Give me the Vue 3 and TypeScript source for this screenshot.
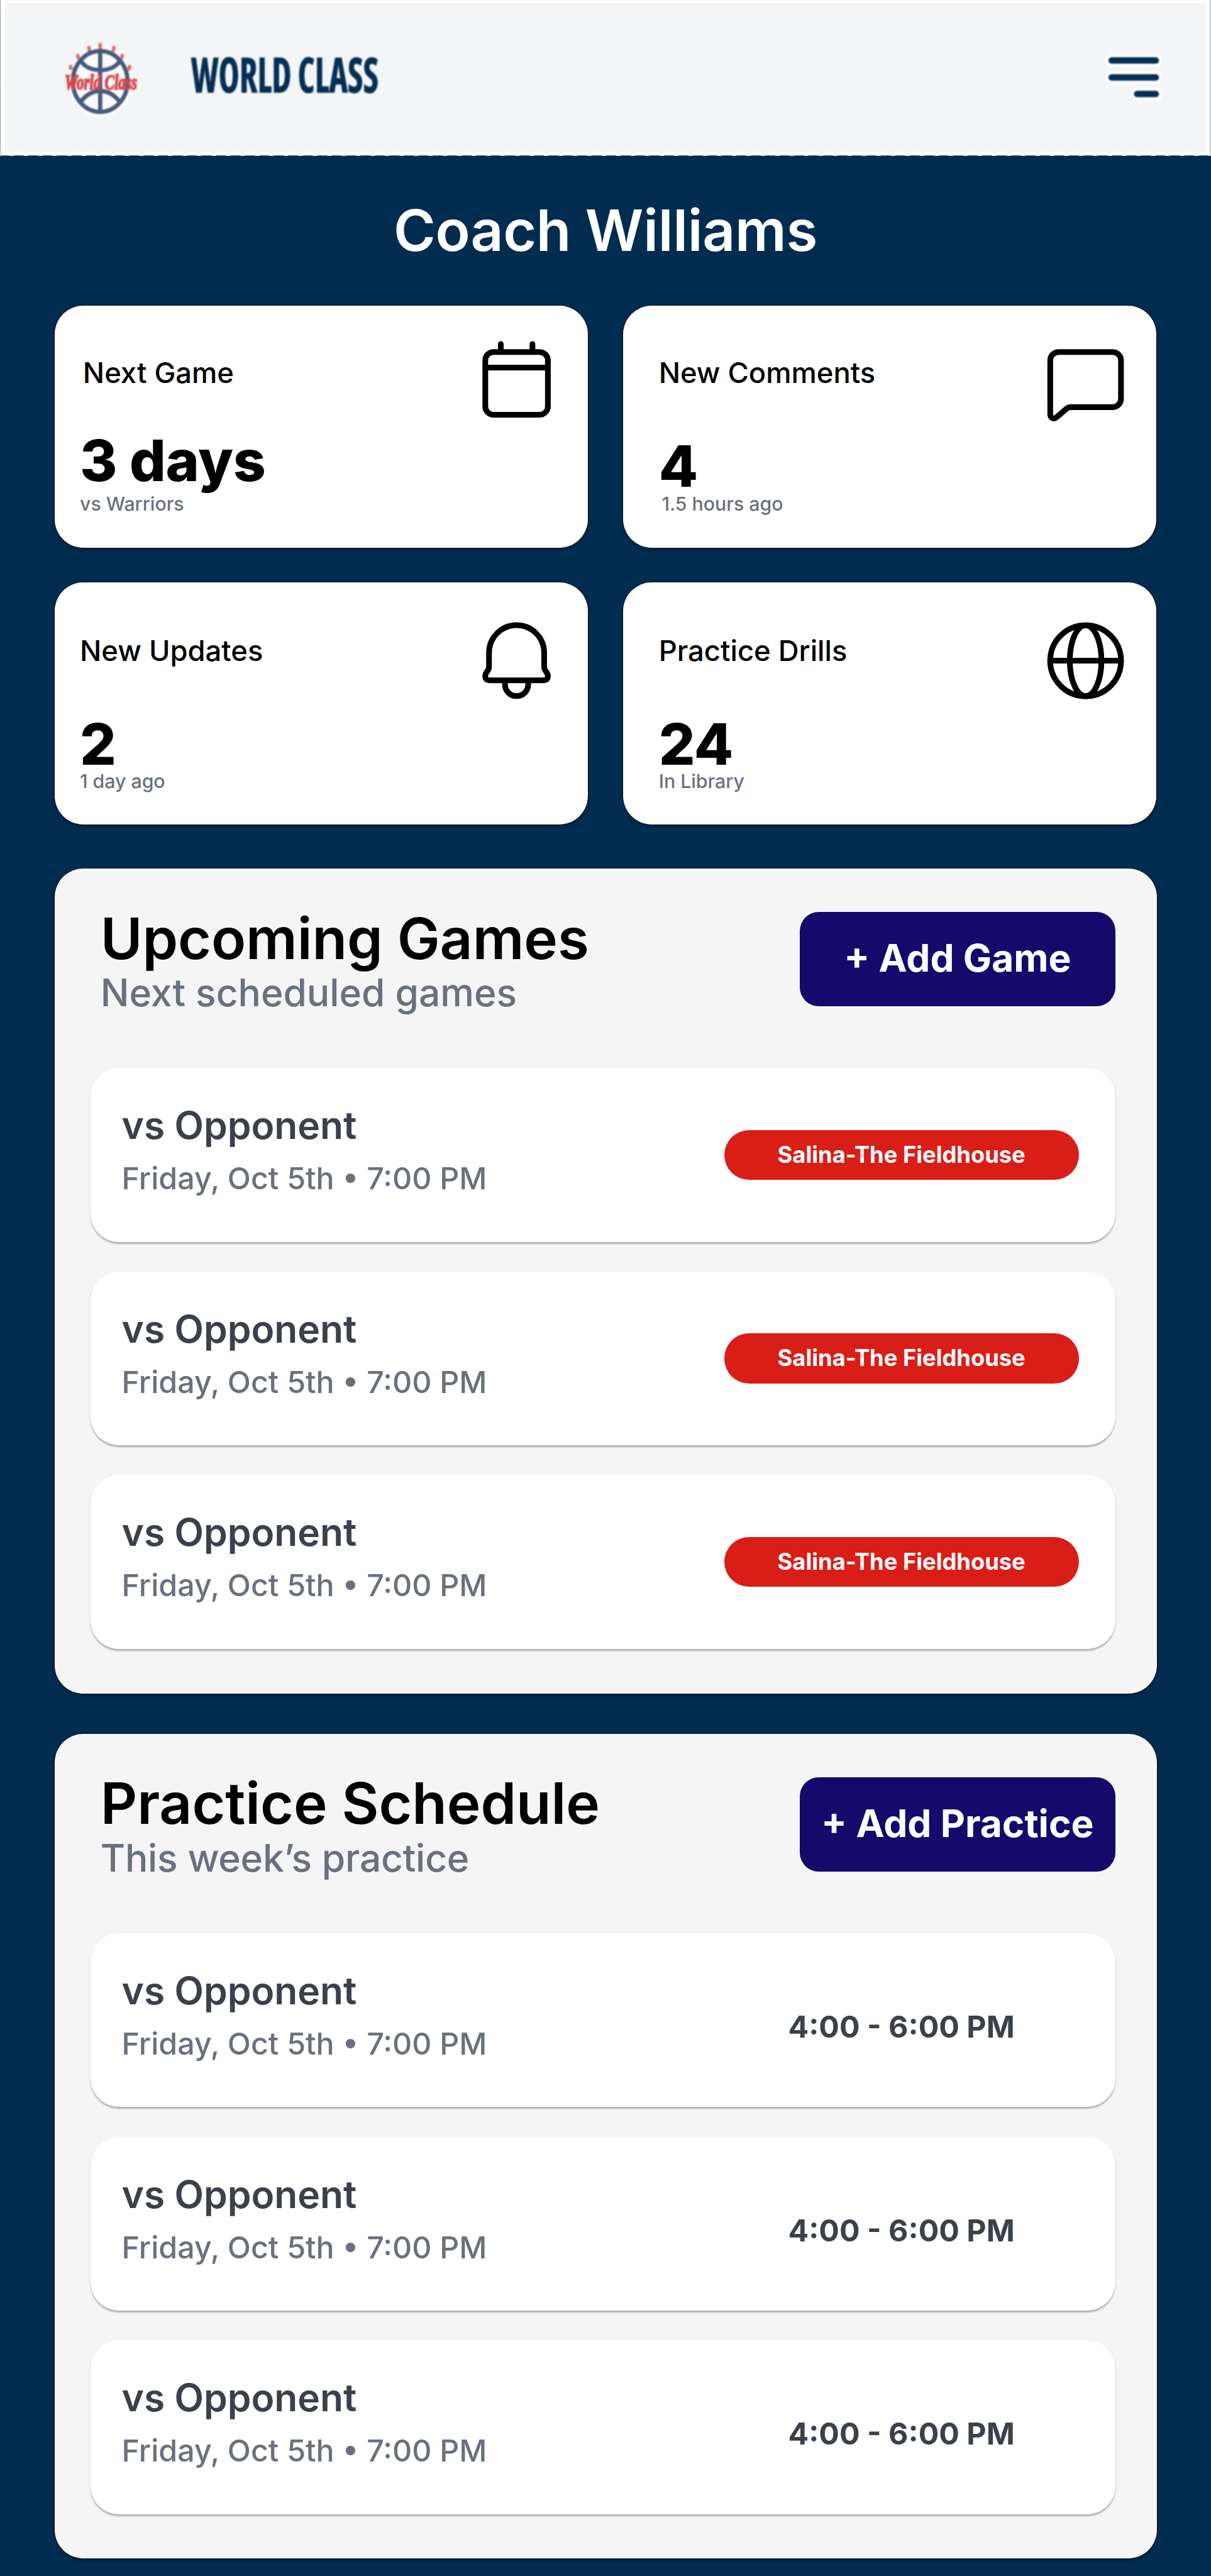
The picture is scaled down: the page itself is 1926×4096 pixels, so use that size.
<script setup lang="ts">
type IconName = 'calendar' | 'comment' | 'bell' | 'globe'

interface Stat {
  label: string
  value: string
  note: string
  icon: IconName
  variant: string
}

interface Entry {
  title: string
  when: string
  detail: string
}

interface Panel {
  title: string
  subtitle: string
  action: string
  kind: 'pill' | 'time'
  entries: Entry[]
}

const stats: Stat[] = [
  { label: 'Next Game', value: '3 days', note: 'vs Warriors', icon: 'calendar', variant: 'raised' },
  { label: 'New Comments', value: '4', note: '1.5 hours ago', icon: 'comment', variant: 'wide note-in' },
  { label: 'New Updates', value: '2', note: '1 day ago', icon: 'bell', variant: 'low' },
  { label: 'Practice Drills', value: '24', note: 'In Library', icon: 'globe', variant: 'wide low' },
]

const repeat = (detail: string): Entry[] =>
  Array.from({ length: 3 }, () => ({ title: 'vs Opponent', when: 'Friday, Oct 5th • 7:00 PM', detail }))

const panels: Panel[] = [
  {
    title: 'Upcoming Games',
    subtitle: 'Next scheduled games',
    action: '+ Add Game',
    kind: 'pill',
    entries: repeat('Salina-The Fieldhouse'),
  },
  {
    title: 'Practice Schedule',
    subtitle: 'This week’s practice',
    action: '+ Add Practice',
    kind: 'time',
    entries: repeat('4:00 - 6:00 PM'),
  },
]
</script>

<template>
  <div class="page">
    <header class="topbar">
      <svg class="brand" viewBox="0 0 1400 300" role="img" aria-label="World Class">
        <ellipse class="halo" cx="113" cy="157" rx="84" ry="96" />
        <g class="rays">
          <path d="M113 57v16M83 65l2 15M150 65l-3 15M53 86l3 13M172 86l-3 13M34 115l3 12M191 115l-3 14" />
        </g>
        <g class="ball">
          <ellipse cx="113" cy="158" rx="72" ry="80" />
          <path d="M113 78V238M61 102Q76 128 113 128Q150 128 166 102M62 211Q84 183 113 183Q142 183 164 211" />
        </g>
        <text class="script" x="20" y="178" textLength="190" lengthAdjust="spacingAndGlyphs">World Class</text>
        <text class="wordmark" x="352" y="187" textLength="493" lengthAdjust="spacingAndGlyphs">WORLD CLASS</text>
      </svg>
      <svg class="menu" viewBox="0 0 160 130" aria-label="Menu">
        <path class="menu-halo" d="M21.500 23.500H137.500M21.500 68H137.500M88.500 111.500H137.500" />
        <path class="menu-bars" d="M21.500 23.500H137.500M21.500 68H137.500M88.500 111.500H137.500" />
      </svg>
    </header>

    <h1 class="coach">Coach Williams</h1>

    <section class="stats">
      <article v-for="s in stats" :key="s.label" class="card" :class="s.variant">
        <div class="card-text">
          <span class="label">{{ s.label }}</span>
          <strong class="value">{{ s.value }}</strong>
          <span class="note">{{ s.note }}</span>
        </div>
        <svg class="icon" viewBox="0 0 240 240">
          <template v-if="s.icon === 'calendar'">
            <rect x="37.700" y="37.500" width="164.600" height="165" rx="22" />
            <path d="M37.700 78.400H202.300M78.500 16.500V37M161.700 16.500V37" />
          </template>
          <path
            v-else-if="s.icon === 'comment'"
            d="M27 59.500V201C27 211 36 215 43 209.500L70 186.500Q75 182.500 82 182.500H191A22 22 0 0 0 213 160.500V59.500A22 22 0 0 0 191 37.500H49A22 22 0 0 0 27 59.500Z"
          />
          <template v-else-if="s.icon === 'bell'">
            <path
              d="M47.500 99A72.500 72.500 0 0 1 192.500 99V137C192.500 147 202.300 150 202.300 160V162A9.400 9.400 0 0 1 192.900 171.400H47.100A9.400 9.400 0 0 1 37.700 162V160C37.700 150 47.500 147 47.500 137Z"
            />
            <path d="M89.500 173V182.500A30.500 30.500 0 0 0 150.500 182.500V173" />
          </template>
          <template v-else>
            <circle cx="120" cy="120" r="93.200" />
            <ellipse cx="120" cy="120" rx="41.600" ry="93.200" />
            <path d="M27 120H213" />
          </template>
        </svg>
      </article>
    </section>

    <section v-for="p in panels" :key="p.title" class="panel">
      <div class="panel-head">
        <div class="panel-titles">
          <h2>{{ p.title }}</h2>
          <p>{{ p.subtitle }}</p>
        </div>
        <button type="button" class="action">{{ p.action }}</button>
      </div>
      <ul class="list">
        <li v-for="(e, i) in p.entries" :key="i" class="item">
          <div class="item-text">
            <h3>{{ e.title }}</h3>
            <p>{{ e.when }}</p>
          </div>
          <span :class="p.kind">{{ e.detail }}</span>
        </li>
      </ul>
    </section>
  </div>
</template>

<style>
html {
  font-size: calc(100vw / 31.84);
}
body {
  margin: 0;
  background: #002c50;
}
</style>

<style scoped>
.page {
  box-sizing: border-box;
  width: 100%;
  height: 67.72rem;
  overflow: hidden;
  background: #002c50;
  font-family: Inter, 'Liberation Sans', sans-serif;
}
h1, h2, h3, p, ul {
  margin: 0;
  padding: 0;
}

.topbar {
  box-sizing: border-box;
  height: 4.1rem;
  display: flex;
  justify-content: space-between;
  align-items: flex-start;
  padding: 0.56rem 1.22rem 0 1.51rem;
  background:
    linear-gradient(90deg, #8a8d92, #fff) left / 0.03rem 100% no-repeat,
    linear-gradient(270deg, #9fbcd6, #fff) right / 0.05rem 100% no-repeat,
    repeating-linear-gradient(90deg, #44566f 0 0.22rem, #dfe6ee 0.26rem 0.34rem, #44566f 0.38rem) bottom / 100% 0.025rem no-repeat,
    linear-gradient(#fff, #fff) top / 100% 0.09rem no-repeat,
    repeating-linear-gradient(90deg, #fff 0 0.24rem, #f4f5f7 0.28rem 0.34rem, #fff 0.38rem) bottom / 100% 0.12rem no-repeat,
    linear-gradient(#fff, #fff) left / 0.13rem 100% no-repeat,
    linear-gradient(#fff, #fff) right / 0.14rem 100% no-repeat,
    #f4f5f7;
}
.brand {
  flex: none;
  width: 14rem;
  height: 3rem;
  filter: blur(1px);
}
.halo { fill: #fafcfd; }
.rays path {
  fill: none;
  stroke: #dd6a6d;
  stroke-width: 9;
}
.ball ellipse, .ball path {
  fill: none;
  stroke: #475a7d;
  stroke-width: 11;
}
.script {
  font: italic 700 54px 'Liberation Serif', serif;
  fill: #d8484c;
  stroke: #d8484c;
  stroke-width: 3;
}
.wordmark {
  font: 700 127px 'Open Sans', sans-serif;
  font-stretch: 75%;
  fill: #042f54;
  stroke: #042f54;
  stroke-width: 1.5;
}
.menu {
  width: 1.6rem;
  height: 1.3rem;
  margin-top: 0.79rem;
  filter: blur(1px);
}
.menu path {
  fill: none;
  stroke-linecap: round;
}
.menu-halo {
  stroke: #fff;
  stroke-width: 34;
}
.menu-bars {
  stroke: #042f54;
  stroke-width: 17;
}

.coach {
  padding: 1.205rem 0 1.225rem;
  text-align: center;
  font-size: 1.5rem;
  line-height: 1.5rem;
  font-weight: 600;
  letter-spacing: -0.0025em;
  color: #fff;
}

.stats {
  display: grid;
  grid-template-columns: repeat(2, 14.03rem);
  gap: 0.905rem 0.92rem;
  margin-left: 1.43rem;
}
.card {
  box-sizing: border-box;
  height: 6.37rem;
  display: flex;
  justify-content: space-between;
  padding: 0.845rem 0.67rem 0 0.67rem;
  border-radius: 0.75rem;
  background: #fff;
  box-shadow: 0 0 0 0.6px #000, 0 0.04rem 0.08rem rgba(0, 0, 0, 0.3);
}
.card.wide { padding-left: 0.94rem; }
.card.low { padding-top: 0.87rem; }
.card-text {
  display: flex;
  flex-direction: column;
  padding-top: 0.55rem;
}
.label {
  font-size: 0.75rem;
  line-height: 0.75rem;
  font-weight: 500;
  color: #000;
}
.value {
  margin: 1.417rem 0 0.051rem;
  font-size: 1.5rem;
  line-height: 1.35rem;
  font-weight: 800;
  letter-spacing: -0.003em;
  color: #000;
}
.note {
  font-size: 0.5rem;
  line-height: 0.5rem;
  font-weight: 500;
  color: #6b7080;
}
.raised .label { margin-left: 0.08rem; }
.raised .value { margin: 1.267rem 0 0.201rem; }
.note-in .note { margin-left: 0.08rem; }
.icon {
  width: 2.4rem;
  height: 2.4rem;
  fill: none;
  stroke: #000;
  stroke-width: 15;
  stroke-linecap: round;
  stroke-linejoin: round;
}

.panel {
  box-sizing: border-box;
  height: 21.68rem;
  margin: 1.16rem 1.43rem 0;
  padding: 0 1.085rem 0 0.95rem;
  border-radius: 0.75rem;
  background: #f5f5f5;
  box-shadow: 0 0 0 0.6px #000, 0 0.04rem 0.08rem rgba(0, 0, 0, 0.3);
}
.panel + .panel { margin-top: 1.065rem; }
.panel-head {
  box-sizing: border-box;
  height: 5.24rem;
  display: flex;
  justify-content: space-between;
  align-items: flex-start;
  padding: 1.08rem 0 0 0.26rem;
}
.panel h2 {
  font-size: 1.5rem;
  line-height: 1.5rem;
  font-weight: 600;
  color: #000;
}
.panel-titles p {
  margin-top: 0.185rem;
  font-size: 1rem;
  line-height: 1rem;
  font-weight: 500;
  color: #6b7080;
}
.panel + .panel .panel-titles p { letter-spacing: -0.0035em; }
.action {
  width: 8.3rem;
  height: 2.48rem;
  margin-top: 0.06rem;
  padding: 0 0 0.05rem;
  border: 0;
  border-radius: 0.5rem;
  background: #15096b;
  color: #fff;
  font: 700 1rem/1 Inter, 'Liberation Sans', sans-serif;
}
.list {
  display: flex;
  flex-direction: column;
  gap: 0.78rem;
  list-style: none;
}
.item {
  box-sizing: border-box;
  height: 4.57rem;
  display: flex;
  justify-content: space-between;
  align-items: center;
  padding: 0 0.965rem 0 0.82rem;
  border-radius: 0.75rem;
  background: #fff;
  box-shadow: 0 0.04rem 0.04rem rgba(0, 0, 0, 0.28);
}
.item-text {
  align-self: flex-start;
  padding-top: 1.01rem;
}
.item h3 {
  font-size: 1rem;
  line-height: 1rem;
  font-weight: 600;
  color: #3c404d;
}
.item p {
  margin-top: 0.504rem;
  font-size: 0.8rem;
  line-height: 0.8rem;
  font-weight: 500;
  color: #6b7080;
}
.pill, .time {
  box-sizing: border-box;
  width: 9.32rem;
  text-align: center;
}
.pill {
  height: 1.31rem;
  border-radius: 0.65rem;
  background: #d91e18;
  color: #fff;
  font-size: 0.6rem;
  line-height: 1.32rem;
  font-weight: 700;
}
.time {
  padding-top: 0.366rem;
  color: #3c404d;
  font-size: 0.8rem;
  line-height: 0.8rem;
  font-weight: 700;
}
</style>
